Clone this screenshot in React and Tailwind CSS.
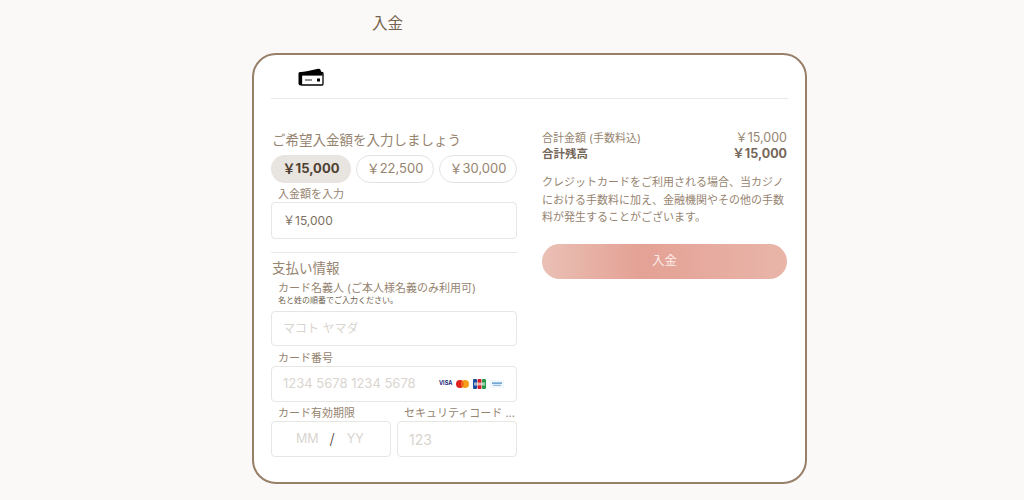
import React from 'react';

const CardIcon = () => (
  <svg width="28" height="20" viewBox="0 0 28 20" className="block">
    <path d="M2 6 L20 2 Q23 1.4 23.6 3 L24.2 5 L6 5 Z" fill="#000" />
    <path d="M1.5 6.5 Q1.5 5 3 5 L5 5 L5 18.5 L3.5 18.5 Q1.5 18.5 1.5 16.5Z" fill="#000" />
    <rect x="4.5" y="5.5" width="21.5" height="12.5" rx="1" fill="#fff" stroke="#000" strokeWidth="1.3" />
    <rect x="5" y="6" width="20.5" height="2.6" fill="#000" />
    <rect x="8" y="12.2" width="7" height="1.6" fill="#777" />
    <rect x="20" y="11.5" width="3" height="3" fill="#000" />
  </svg>
);

const CardLogos = () => (
  <div className="flex items-center gap-[4px]">
    <span className="w-[13px] text-[5.5px] leading-none font-bold text-[#1a2a7a]">VISA</span>
    <svg width="13" height="8" viewBox="0 0 13 8">
      <circle cx="4" cy="4" r="4" fill="#e0231c" />
      <circle cx="9" cy="4" r="4" fill="#f79e1b" />
      <path d="M6.5 1 A4 4 0 0 1 6.5 7 A4 4 0 0 1 6.5 1Z" fill="#f0641a" />
    </svg>
    <svg width="13" height="10" viewBox="0 0 13 10">
      <rect x="0" y="0" width="4" height="10" rx="1" fill="#1a4a9a" />
      <rect x="4.5" y="0" width="4" height="10" rx="1" fill="#d0202c" />
      <rect x="9" y="0" width="4" height="10" rx="1" fill="#2a9a4a" />
      <rect x="1" y="3.5" width="11" height="3" fill="#fff" opacity="0.6" />
    </svg>
    <svg width="14" height="8" viewBox="0 0 14 8">
      <rect width="14" height="8" fill="#f2f7fb" />
      <rect x="2" y="2.5" width="10" height="1.2" fill="#3f86c6" />
      <rect x="3" y="4.8" width="8" height="1" fill="#7fb0dc" />
    </svg>
  </div>
);

const Pill = ({ children, active, className }) => (
  <div
    className={
      active
        ? `flex h-7 items-center justify-center rounded-full bg-[#e8e4e0] text-[13px] font-bold text-[#4f4030] ${className}`
        : `flex h-7 items-center justify-center rounded-full border border-[#e6e3df] bg-white text-[13px] text-[#968470] ${className}`
    }
  >
    {children}
  </div>
);

const Label = ({ children }) => (
  <div className="pl-[7px] text-[11px] leading-[14px] whitespace-nowrap text-[#968470]">{children}</div>
);

const Field = ({ children, className }) => (
  <div className={`flex items-center rounded-[4px] border border-[#e6e6e2] bg-white ${className}`}>{children}</div>
);

export default function App() {
  return (
    <div className="h-[500px] w-[1024px] overflow-hidden bg-[#fbf9f7] pl-[252px]">
      <div className="w-[555px] font-['Inter','Noto_Sans_CJK_JP',sans-serif]">
        <h1 className="h-[53px] pt-[14px] pl-[120px] text-[15.5px] leading-5 font-normal text-[#75624e]">入金</h1>

        <div className="h-[431px] rounded-[24px] border-2 border-[#977f68] bg-white px-[17px]">
          <div className="flex h-[44px] items-start border-b border-[#e8e8e6] pt-[12px] pl-[26px]">
            <CardIcon />
          </div>

          <div className="flex gap-[25px]">
            <div className="w-[246px]">
              <div className="mt-[31px] pl-px text-[13.5px] leading-[20px] text-[#968470]">ご希望入金額を入力しましょう</div>
              <div className="mt-[5px] flex gap-[5px]">
                <Pill active className="w-[80px]">￥15,000</Pill>
                <Pill className="w-[78px]">￥22,500</Pill>
                <Pill className="w-[78px]">￥30,000</Pill>
              </div>
              <div className="mt-[4px]">
                <Label>入金額を入力</Label>
              </div>
              <Field className="mt-[1px] h-[37px] px-[11px] text-[12px] text-[#7d6f61]">￥15,000</Field>

              <div className="mt-[13px] border-t border-[#e8e8e6]" />
              <div className="mt-[5px] pl-px text-[13.5px] leading-[20px] text-[#968470]">支払い情報</div>
              <div className="mt-[3px]">
                <Label>カード名義人 (ご本人様名義のみ利用可)</Label>
              </div>
              <div className="px-[7px] text-[8px] leading-[10px] text-[#6e5f50]">名と姓の順番でご入力ください。</div>
              <Field className="mt-[6px] h-[35px] px-[11px] text-[12px] text-[#d9d5cf]">マコト ヤマダ</Field>

              <div className="mt-[5px]">
                <Label>カード番号</Label>
              </div>
              <Field className="mt-px h-[36px] justify-between pr-[12px] pl-[11px] text-[13px] text-[#d9d5cf]">
                <span>1234 5678 1234 5678</span>
                <CardLogos />
              </Field>

              <div className="mt-[4px] flex gap-[6px]">
                <div className="w-[120px]">
                  <Label>カード有効期限</Label>
                  <Field className="mt-px h-[36px] pl-[24px] text-[12.5px] text-[#d9d5cf]">
                    <span>MM</span>
                    <span className="ml-[11px] text-[15px] font-light text-[#5a4a3a]">/</span>
                    <span className="ml-[12px]">YY</span>
                  </Field>
                </div>
                <div className="w-[120px]">
                  <Label>セキュリティコード ...</Label>
                  <Field className="mt-px h-[36px] px-[11px] text-[14px] text-[#d9d5cf]">123</Field>
                </div>
              </div>
            </div>

            <div className="w-[245px]">
              <div className="mt-[31px] flex justify-between text-[11px] leading-[16px] text-[#968470]">
                <span>合計金額 (手数料込)</span>
                <span className="text-[12.5px]">￥15,000</span>
              </div>
              <div className="flex justify-between text-[11.5px] leading-[16px] font-bold text-[#75665a]">
                <span>合計残高</span>
                <span className="text-[12.5px]">￥15,000</span>
              </div>
              <p className="mt-[12px] text-[11px] leading-[17.5px] text-[#968470]">
                クレジットカードをご利用される場合、当カジノにおける手数料に加え、金融機関やその他の手数料が発生することがございます。
              </p>
              <button className="mt-[17px] flex h-[35px] w-full items-center justify-center rounded-full bg-gradient-to-r from-[#eac0b5] via-[#e4a195] via-40% to-[#e9b5a9] text-[12.5px] text-[#fbeeea]">
                入金
              </button>
            </div>
          </div>
        </div>
      </div>
    </div>
  );
}
